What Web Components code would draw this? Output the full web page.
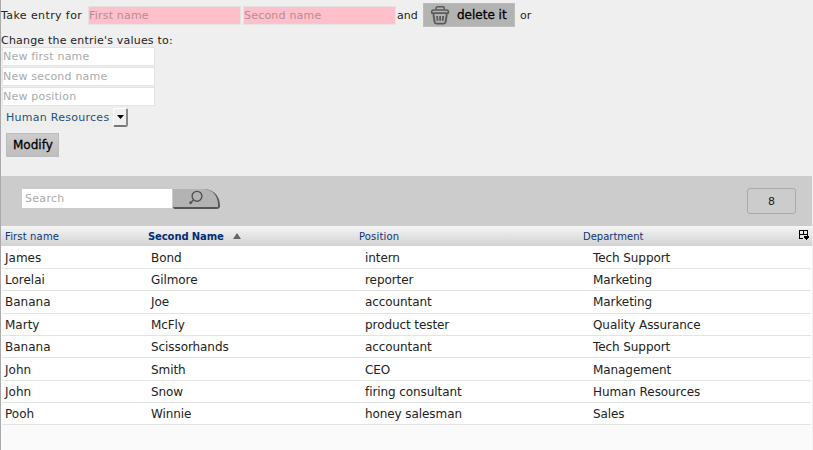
<!DOCTYPE html>
<html lang="en">
<head>
<meta charset="utf-8">
<title>Employees</title>
<style>
html,body{margin:0;height:100%;overflow:hidden;background:#efefef}
body{font-family:"DejaVu Sans",Verdana,sans-serif;font-size:11px;color:#222}
</style>
</head>
<body>
<staff-page></staff-page>
<script>
const define=(name,css,html)=>customElements.define(name,class extends HTMLElement{
  connectedCallback(){
    if(this.shadowRoot)return;
    const t=document.createElement('template');
    t.innerHTML='<style>*{box-sizing:border-box}'+css+'</style>'+(typeof html==='function'?html(this):html);
    this.attachShadow({mode:'open'}).append(t.content.cloneNode(true));
  }
});

define('text-field',`
:host{display:block;box-sizing:border-box;width:153px;height:19px;border:1px solid #e3e3e3;background:var(--fill,#fff);color:var(--ink,#aaa);line-height:17px;white-space:nowrap;letter-spacing:.2px}
`,'<slot></slot>');

define('push-button',`
:host{display:flex;box-sizing:border-box;height:24px;align-items:center;border:1px solid #bcbcbc;background:var(--fill,#b3b3b3);color:#000;font-size:12px;white-space:nowrap;-webkit-text-stroke:.3px #000}
`,'<slot></slot>');

define('trash-icon',`:host{display:block;width:20px;height:20px}svg{display:block}`,`
<svg width="20" height="20" viewBox="0 0 20 20" fill="none" stroke="#5a5a5a" stroke-linejoin="round">
<path d="M6.2 4.6V2.8Q6.2 1.7 7.3 1.7H13.1Q14.2 1.7 14.2 2.8V4.6" stroke-width="1.5"/>
<path d="M1.7 8.1V6.8Q1.7 5 3.6 5H16.6Q18.4 5 18.4 6.8V8.1Z" stroke-width="1.6"/>
<path d="M3.4 9L4.6 17Q4.8 18.6 6.4 18.6H13.8Q15.4 18.6 15.6 17L16.8 9" stroke-width="1.9"/>
<path d="M7 11L7.6 15.8M10.1 11V15.8M13.2 11L12.6 15.8" stroke-width="1.8"/></svg>`);

define('drop-down',`
:host{display:flex;box-sizing:border-box;width:127px;height:19px;background:#eeeeec;border-radius:3px;color:#245080;line-height:20px;padding-left:5px;justify-content:space-between;white-space:nowrap;letter-spacing:.27px}
.b{width:15px;height:19px;background:#efefef;border:1px solid #fff;border-right:2px solid #888;border-bottom:2px solid #777;border-radius:2px;display:flex;align-items:center;justify-content:center}
svg{display:block}
`,`<span><slot></slot></span><span class="b"><svg width="7" height="4"><path d="M0 0H7L3.5 4Z" fill="#000"/></svg></span>`);

define('entry-form',`
:host{display:flex;flex-direction:column;align-items:flex-start;height:176px;padding-top:3px}
.line{display:flex;align-items:center;height:24px;white-space:nowrap}
.line text-field{--fill:#ffc0cb;--ink:#b58d94;margin-top:1px}
.t1{width:87px;letter-spacing:.4px}.t2{width:27px;padding-left:1px}.t3{padding-left:5px}
.t1,.t2,.t3{line-height:14px;padding-top:2px}
push-button.del{width:92px;padding-left:6px;gap:7px}
.cap{line-height:14px;margin-top:7px;height:16px;white-space:nowrap;letter-spacing:.2px}
.fields{display:flex;flex-direction:column;gap:1px;padding-left:1px;margin-top:-3px}
drop-down{margin-top:2px}
push-button.mod{width:53px;margin:6px 0 0 5px;padding-left:6px;--fill:linear-gradient(#ccc,#bebebe)}
`,`
<div class="line"><span class="t1">Take entry for</span><text-field>First name</text-field><text-field style="margin-left:2px">Second name</text-field><span class="t2">and</span><push-button class="del"><trash-icon></trash-icon><span>delete it</span></push-button><span class="t3">or</span></div>
<div class="cap">Change the entrie's values to:</div>
<div class="fields"><text-field>New first name</text-field><text-field>New second name</text-field><text-field>New position</text-field></div>
<drop-down>Human Resources</drop-down>
<push-button class="mod">Modify</push-button>`);

define('search-bar',`
:host{display:flex;box-sizing:border-box;height:50px;background:#ccc;padding:12px 16px 0 21px;align-items:flex-start}
.in{width:150px;height:19px;margin-top:1px;background:#fff;color:#aaa;line-height:20px;padding-left:3px;letter-spacing:.3px}
.go{display:block;width:48px;height:20px;margin-top:1px}
.count{margin-left:auto;width:49px;height:26px;border:1px solid #aaa;border-radius:3px;line-height:25px;text-align:center}
`,`<div class="in">Search</div>
<svg class="go" viewBox="0 0 48 20"><path d="M2 0H33Q47 2 48 16V18Q47 20 45 20H3Q1 20 1 18V1Q1 0 2 0Z" fill="#555"/><path d="M2 0H33Q45 2 46 15V18H2Q1 18 1 17V1Q1 0 2 0Z" fill="#b3b3b3"/><g fill="none" stroke="#505050"><circle cx="25" cy="7.3" r="4.9" stroke-width="1.4"/><path d="M21.5 11L19.7 12.8" stroke-width="1.3"/><path d="M19.8 12.7L17.7 14.7" stroke-width="2.3"/></g></svg>
<div class="count">8</div>`);

define('column-picker',`:host{display:block;width:11px;height:11px}svg{display:block}`,`
<svg width="11" height="11" viewBox="0 0 11 11" shape-rendering="crispEdges"><path d="M0 .5H9M.5 0V9M8.5 0V6M4.5 0V5M0 4.5H9M0 8.5H4" fill="none" stroke="#000"/><path d="M5 6H10V8H9V9H8V10H7V9H6V8H5Z" fill="#000"/></svg>`);

define('table-head',`
:host{display:grid;grid-template-columns:143px 211px 224px 1fr;box-sizing:border-box;height:20px;padding:0 2px 0 4px;background:linear-gradient(#f5f5f5,#d2d2d2);color:#0b3578;font-size:10px;line-height:21px;white-space:nowrap}
.f{letter-spacing:.15px}
.s{display:flex;gap:9px;font-weight:bold;color:#002e73;letter-spacing:-.1px}.s svg{margin-top:7px}
.l{display:flex;justify-content:space-between}column-picker{margin-top:4px}
`,`<span class="f">First name</span><span class="s">Second Name<svg width="8" height="6"><path d="M0 6L4 0L8 6Z" fill="#666"/></svg></span><span class="f">Position</span><span class="l">Department<column-picker></column-picker></span>`);

define('table-row',`
:host{display:grid;grid-template-columns:146px 214px 228px 1fr;box-sizing:border-box;height:var(--h);margin:0 1px 0 1px;padding-left:3px;background:#fff;border-bottom:1px solid #e3e3e3;font-size:12px;line-height:var(--lh,22px);white-space:nowrap}
span+span{letter-spacing:-.08px}
`,el=>el.getAttribute('values').split('|').map(v=>'<span>'+v+'</span>').join(''));

define('staff-page',`
:host{display:block;box-sizing:border-box;width:813px;height:450px;border-left:1px solid #aaa;padding-right:1px}
.page{display:flex;flex-direction:column;height:450px}
entry-form{flex:none}.rows{background:#fff}.rest{flex:1;background:#fafafa}
`,()=>{
  const rows=[['James|Bond|intern|Tech Support',23,24],['Lorelai|Gilmore|reporter|Marketing',22,22],['Banana|Joe|accountant|Marketing',23,22],['Marty|McFly|product tester|Quality Assurance',22,22],['Banana|Scissorhands|accountant|Tech Support',22,22],['John|Smith|CEO|Management',23,24],['John|Snow|firing consultant|Human Resources',22,22],['Pooh|Winnie|honey salesman|Sales',22,22]];
  return '<div class="page"><entry-form></entry-form><search-bar></search-bar><table-head></table-head><div class="rows">'+rows.map(([v,h,l])=>`<table-row values="${v}" style="--h:${h}px;--lh:${l}px"></table-row>`).join('')+'</div><div class="rest"></div></div>';
});
</script>
</body>
</html>
